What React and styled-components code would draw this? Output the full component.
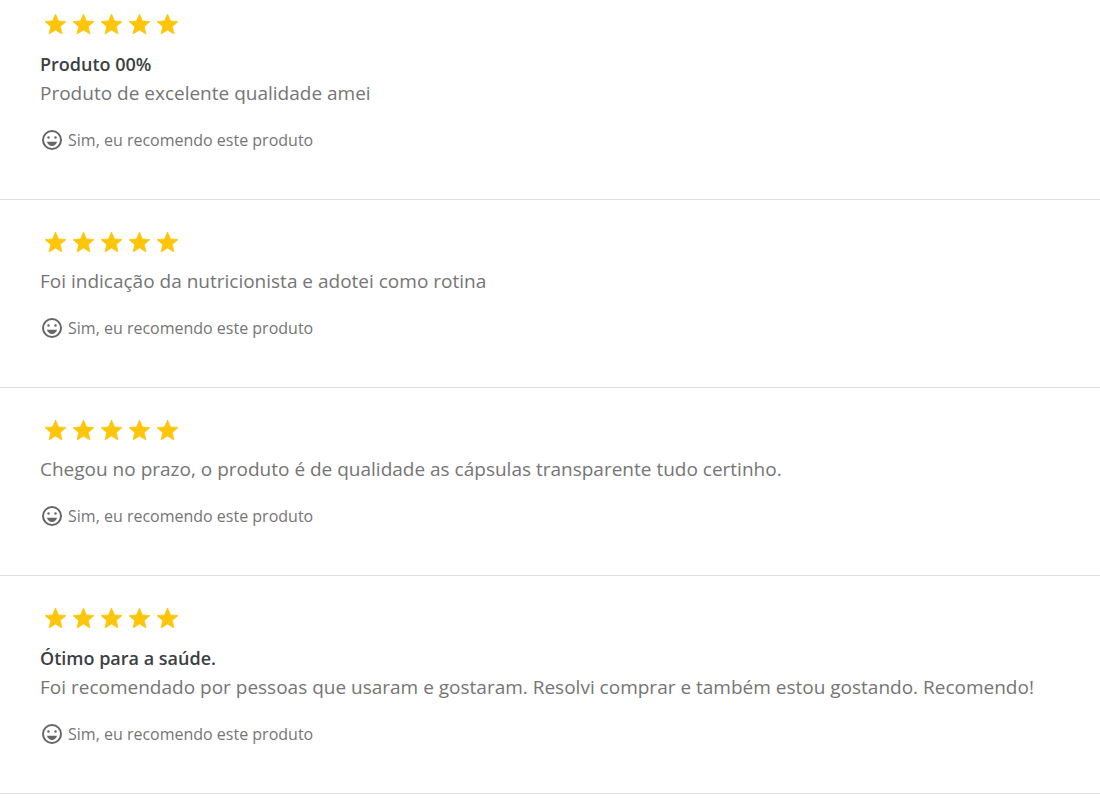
import React from "react";
import styled, { createGlobalStyle } from "styled-components";

const GlobalStyle = createGlobalStyle`
  * {
    box-sizing: border-box;
  }
  body {
    margin: 0;
    background: #fff;
    font-family: "Open Sans", sans-serif;
  }
`;

const SList = styled.ul`
  margin: 0;
  padding: 0;
  list-style: none;
`;

const SReview = styled.li`
  padding: 30px 40px 47px;
  border-bottom: 1px solid #e0e0e0;
  &:first-child {
    padding-top: 12px;
  }
`;

const SStars = styled.div`
  display: flex;
  gap: 3px;
  padding-left: 3px;
  margin-bottom: 12px;
  svg {
    display: block;
    width: 25px;
    height: 25px;
    fill: #fdc60a;
    stroke: #fdc60a;
    stroke-width: 0.8;
    stroke-linejoin: round;
  }
`;

const STitle = styled.h3`
  margin: 0;
  font-size: 18px;
  font-weight: 600;
  line-height: 30px;
  color: #3c4043;
`;

const SText = styled.p`
  margin: 0;
  font-size: 19px;
  line-height: 28px;
  color: #757575;
`;

const SRecommend = styled.div`
  display: flex;
  align-items: center;
  gap: 4px;
  margin-top: 21px;
  font-size: 16px;
  line-height: 24px;
  color: #757575;
  svg {
    width: 24px;
    height: 24px;
    fill: #666;
  }
`;

const reviews = [
  { title: "Produto 00%", text: "Produto de excelente qualidade amei" },
  { text: "Foi indicação da nutricionista e adotei como rotina" },
  {
    text: "Chegou no prazo, o produto é de qualidade as cápsulas transparente tudo certinho.",
  },
  {
    title: "Ótimo para a saúde.",
    text: "Foi recomendado por pessoas que usaram e gostaram. Resolvi comprar e também estou gostando. Recomendo!",
  },
];

const Star = () => (
  <svg viewBox="0 0 24 24" aria-hidden="true">
    <path d="M12 17.27 18.18 21l-1.64-7.03L22 9.24l-7.19-.61L12 2 9.19 8.63 2 9.24l5.46 4.73L5.82 21z" />
  </svg>
);

const Smile = () => (
  <svg viewBox="0 0 24 24" aria-hidden="true">
    <path d="M12 2a10 10 0 1 0 0 20 10 10 0 0 0 0-20zm0 18a8 8 0 1 1 0-16 8 8 0 0 1 0 16z" />
    <circle cx="8.5" cy="9.5" r="1.2" />
    <circle cx="15.5" cy="9.5" r="1.2" />
    <path d="M12 18c2.33 0 4.31-1.6 5.11-4.2H6.89C7.69 16.4 9.67 18 12 18z" />
  </svg>
);

const Review = ({ title, text }) => {
  return (
    <SReview>
      <SStars role="img" aria-label="5 de 5 estrelas">
        {[1, 2, 3, 4, 5].map((n) => (
          <Star key={n} />
        ))}
      </SStars>
      {title && <STitle>{title}</STitle>}
      <SText>{text}</SText>
      <SRecommend>
        <Smile />
        <span>Sim, eu recomendo este produto</span>
      </SRecommend>
    </SReview>
  );
};

export default function App() {
  return (
    <>
      <GlobalStyle />
      <SList>
        {reviews.map((review) => (
          <Review key={review.text} {...review} />
        ))}
      </SList>
    </>
  );
}
